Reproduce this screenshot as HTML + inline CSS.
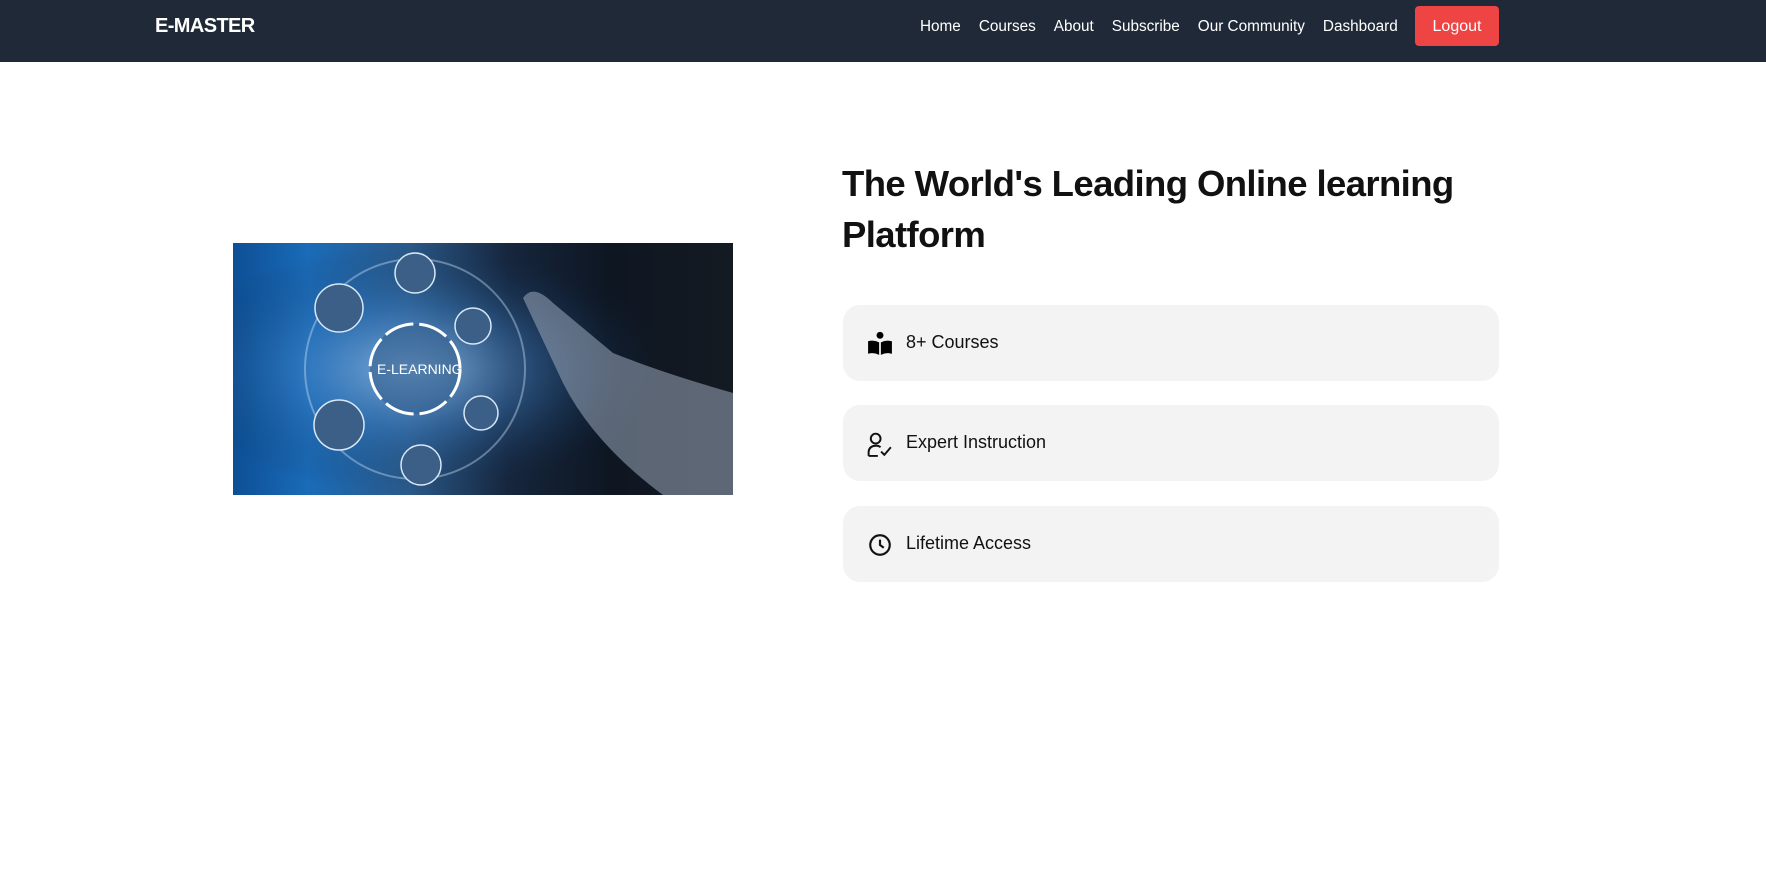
<!DOCTYPE html>
<html><head><meta charset="utf-8"><style>
*{margin:0;padding:0;box-sizing:border-box}
body{width:1766px;height:870px;background:#fff;font-family:"Liberation Sans",sans-serif;position:relative;overflow:hidden}
.nav{position:absolute;left:0;top:0;width:1766px;height:62px;background:#1f2937}
.logo{position:absolute;left:155px;top:15px;color:#fff;font-weight:bold;font-size:20px;letter-spacing:-0.6px}
.links{position:absolute;left:920px;top:18px;display:flex;gap:18px;color:#fff;font-size:15.3px;white-space:nowrap}
.btn{position:absolute;left:1415px;top:6px;width:84px;height:40px;background:#ef4444;border-radius:4px;color:#fff;font-size:16px;text-align:center;line-height:42px}
.img{position:absolute;left:233px;top:243px;width:500px;height:252px;overflow:hidden;background:linear-gradient(90deg,#0d4f95 0%,#1a6bb8 15%,#2b5a8a 35%,#16263d 55%,#0e1622 75%,#141a22 100%)}
h1{position:absolute;left:842px;top:158px;font-size:36.5px;line-height:51px;font-weight:bold;color:#111;letter-spacing:-0.6px;width:640px}
.card{position:absolute;left:843px;width:656px;height:76px;background:#f3f3f3;border-radius:17px}
.card span{position:absolute;left:63px;top:27px;font-size:18px;color:#111}
.card svg{position:absolute;left:24px;top:26px}
</style></head><body>
<div class="nav"><div class="logo">E-MASTER</div>
<div class="links"><span>Home</span><span>Courses</span><span>About</span><span>Subscribe</span><span>Our Community</span><span>Dashboard</span></div>
<div class="btn">Logout</div></div>
<div class="img"><svg width="500" height="252" viewBox="0 0 500 252">
<defs><radialGradient id="g" cx="0.36" cy="0.5" r="0.5"><stop offset="0" stop-color="#9cc6f0" stop-opacity="0.8"/><stop offset="0.5" stop-color="#3b7cc0" stop-opacity="0.4"/><stop offset="1" stop-color="#0b2a4d" stop-opacity="0"/></radialGradient></defs>
<rect width="500" height="252" fill="url(#g)"/>
<circle cx="182" cy="126" r="110" fill="none" stroke="#cfe3f7" stroke-opacity="0.4" stroke-width="2"/>
<circle cx="182" cy="126" r="45" fill="#35608f" fill-opacity="0.6" stroke="#fff" stroke-width="3" stroke-dasharray="30 6"/>
<text x="144" y="131" fill="#fff" font-family="Liberation Sans" font-size="14">E-LEARNING</text>
<g fill="#3b5f86" stroke="#d8e8f8" stroke-width="1.5"><circle cx="182" cy="30" r="20"/><circle cx="240" cy="83" r="18"/><circle cx="248" cy="170" r="17"/><circle cx="188" cy="222" r="20"/><circle cx="106" cy="182" r="25"/><circle cx="106" cy="65" r="24"/></g>
<path d="M320 60 Q300 40 290 55 L330 140 Q360 200 430 252 L500 252 L500 150 Q430 130 380 110 Z" fill="#9aa8ba" fill-opacity="0.55"/>
</svg></div>
<h1>The World's Leading Online learning Platform</h1>
<div class="card" style="top:305px"><svg width="26" height="26" viewBox="0 0 24 24"><circle cx="12" cy="4" r="3.2"/><path d="M1 9.5 Q6 8 11.2 10.5 V22 Q6 19.5 1 21Z M23 9.5 Q18 8 12.8 10.5 V22 Q18 19.5 23 21Z"/></svg><span>8+ Courses</span></div>
<div class="card" style="top:405px"><svg width="26" height="26" viewBox="0 0 24 24" fill="none" stroke="#111" stroke-width="1.8"><circle cx="8" cy="7" r="4.5"/><path d="M1.5 23 V19 Q2 14 8 13.5 Q11 13.6 12.5 15 M1.5 23 H10 M13 19 l3 3 l6 -7"/></svg><span>Expert Instruction</span></div>
<div class="card" style="top:506px"><svg width="26" height="26" viewBox="0 0 24 24" fill="none" stroke="#111" stroke-width="2"><circle cx="12" cy="12" r="9"/><path d="M12 7 V12 L15.5 14.5"/></svg><span>Lifetime Access</span></div>
</body></html>
